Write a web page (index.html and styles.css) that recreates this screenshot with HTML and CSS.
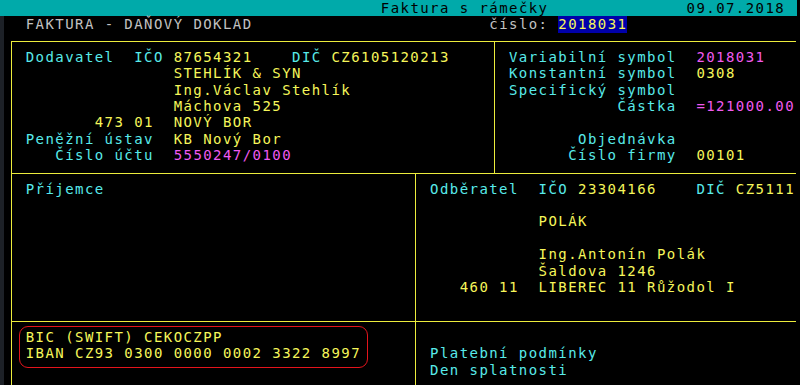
FILE: index.html
```html
<!DOCTYPE html>
<html lang="cs">
<head>
<meta charset="utf-8">
<title>Faktura s rámečky</title>
<link rel="stylesheet" href="styles.css">
</head>
<body>
<div class="titlebar"><div class="line">                                      Faktura s rámečky              09.07.2018</div></div>
<div class="main">
  <div class="line gray">  FAKTURA - DAŇOVÝ DOKLAD                        číslo: <span class="hl">2018031</span></div>
  <div class="frame">
    <div class="panel panel-top">
      <div class="cell">
        <div class="line"><span class="c">Dodavatel  IČO </span><span class="y">87654321</span><span class="c">    DIČ </span><span class="y">CZ6105120213</span></div>
        <div class="line y">               STEHLÍK &amp; SYN</div>
        <div class="line y">               Ing.Václav Stehlík</div>
        <div class="line y">               Máchova 525</div>
        <div class="line y">       473 01  NOVÝ BOR</div>
        <div class="line"><span class="c">Peněžní ústav  </span><span class="y">KB Nový Bor</span></div>
        <div class="line"><span class="c">   Číslo účtu  </span><span class="m">5550247/0100</span></div>
      </div>
      <div class="cell cell-right">
        <div class="line"><span class="c">Variabilní symbol  </span><span class="m">2018031</span></div>
        <div class="line"><span class="c">Konstantní symbol  </span><span class="y">0308</span></div>
        <div class="line c">Specifický symbol</div>
        <div class="line"><span class="c">           Částka  </span><span class="m">=121000.00</span></div>
        <div class="line"></div>
        <div class="line c">       Objednávka</div>
        <div class="line"><span class="c">      Číslo firmy  </span><span class="y">00101</span></div>
      </div>
    </div>
    <div class="panel panel-split panel-mid">
      <div class="cell">
        <div class="line c">Příjemce</div>
        <div class="line"></div>
        <div class="line"></div>
        <div class="line"></div>
        <div class="line"></div>
        <div class="line"></div>
        <div class="line"></div>
        <div class="line"></div>
      </div>
      <div class="cell cell-right">
        <div class="line"><span class="c">Odběratel  IČO </span><span class="y">23304166</span><span class="c">    DIČ </span><span class="y">CZ5111</span></div>
        <div class="line"></div>
        <div class="line y">           POLÁK</div>
        <div class="line"></div>
        <div class="line y">           Ing.Antonín Polák</div>
        <div class="line y">           Šaldova 1246</div>
        <div class="line y">   460 11  LIBEREC 11 Růžodol I</div>
        <div class="line"></div>
      </div>
    </div>
    <div class="panel panel-split panel-bottom">
      <div class="cell">
        <div class="bank">
          <div class="line y">BIC (SWIFT) CEKOCZPP</div>
          <div class="line y">IBAN CZ93 0300 0000 0002 3322 8997</div>
        </div>
        <div class="line"></div>
        <div class="line"></div>
      </div>
      <div class="cell cell-right">
        <div class="line"></div>
        <div class="line c">Platební podmínky</div>
        <div class="line c">Den splatnosti</div>
        <div class="line"></div>
      </div>
    </div>
  </div>
</div>
</body>
</html>
```
FILE: styles.css
```css
:root {
  --w: 9.863px;
  --h: 16.35px;
  --line: #ecec3c;
  --cyan: #58eaea;
  --yellow: #f6f65a;
  --magenta: #f05af0;
  --gray: #c2c2c2;
}

html, body {
  margin: 0;
  height: 385px;
  overflow: hidden;
  background: #000;
}

body {
  font-family: "DejaVu Sans Mono", monospace;
  font-size: 14px;
  line-height: var(--h);
  letter-spacing: calc(var(--w) - 8.4287px);
  color: var(--gray);
}

.line {
  height: var(--h);
  white-space: pre;
}

.titlebar {
  background: #00aaaa;
  color: #000;
  padding-left: 6px;
  width: 791px;
}

.main {
  border-left: 4px solid #1d2127;
  padding-left: 2px;
  height: calc(385px - var(--h));
}

.gray { color: var(--gray); }
.c { color: var(--cyan); }
.y { color: var(--yellow); }
.m { color: var(--magenta); }

.hl {
  background: #0000aa;
  color: var(--yellow);
  display: inline-block;
  height: var(--h);
}

.frame {
  margin-top: calc(var(--h) / 2);
  margin-left: calc(var(--w) / 2);
  width: calc(79.5 * var(--w));
  border-left: 1px solid var(--line);
}

.panel {
  display: grid;
  border-top: 1px solid var(--line);
}

.panel-top {
  grid-template-columns: calc(49 * var(--w) - 1px) 1fr;
}

.panel-split {
  grid-template-columns: calc(41 * var(--w) - 1px) 1fr;
}

.cell {
  padding: calc(var(--h) / 2 - 1px) 0 calc(var(--h) / 2) calc(1.5 * var(--w) - 1px);
  overflow: hidden;
  min-width: 0;
}

.panel-top .cell,
.panel-mid .cell {
  padding-bottom: calc(var(--h) / 2 + 1px);
}

.cell-right {
  border-left: 1px solid var(--line);
}

.bank {
  position: relative;
}

.bank::after {
  content: "";
  position: absolute;
  left: -7px;
  top: -3px;
  width: 349px;
  height: 42px;
  box-sizing: border-box;
  border: 1.5px solid #e3141c;
  border-radius: 9px;
}
```
